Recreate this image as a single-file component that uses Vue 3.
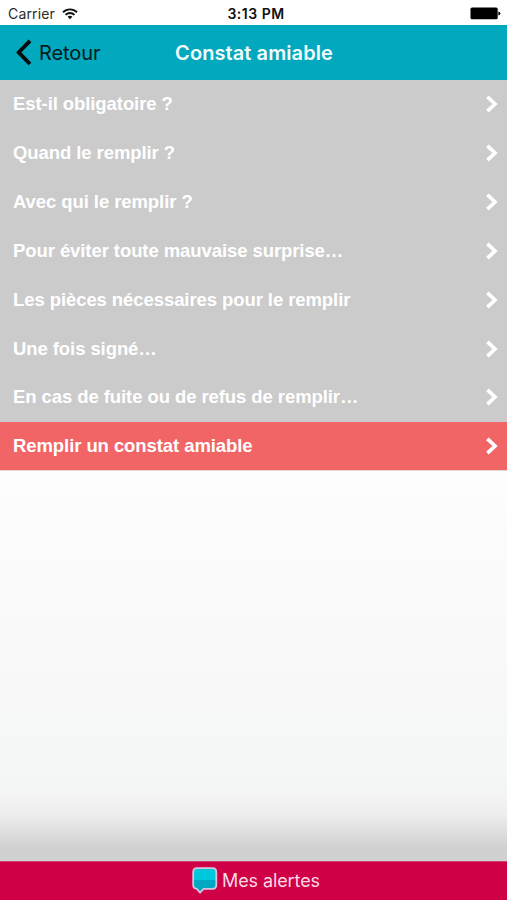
<script setup>
const items = [
  'Est-il obligatoire ?',
  'Quand le remplir ?',
  'Avec qui le remplir ?',
  'Pour éviter toute mauvaise surprise…',
  'Les pièces nécessaires pour le remplir',
  'Une fois signé…',
  'En cas de fuite ou de refus de remplir…',
  'Remplir un constat amiable',
]
</script>

<template>
  <div class="screen">
    <div class="status">
      <div class="side">
        <span class="carrier">Carrier</span>
        <svg class="wifi" width="16" height="12" viewBox="0 0 16 12">
          <g fill="none" stroke="#111" stroke-width="1.9">
            <path d="M1 4.2a10 10 0 0 1 14 0" />
            <path d="M3.5 6.9a6.4 6.4 0 0 1 9 0" />
          </g>
          <path d="M5.6 8.8a3.5 3.5 0 0 1 4.8 0L8 11.2z" fill="#111" />
        </svg>
      </div>
      <span class="time">3:13 PM</span>
      <div class="side end">
        <svg width="31" height="13" viewBox="0 0 31 13">
          <rect x="0.5" y="0.6" width="27.2" height="11.7" rx="1.6" fill="#000" />
          <path d="M28.4 4.4q2 .6 2 2.1t-2 2.1z" fill="#000" />
        </svg>
      </div>
    </div>

    <header class="nav">
      <div class="back">
        <svg width="17" height="27" viewBox="0 0 17 27">
          <path d="M14 1.8L2.7 13.4L14 25" fill="none" stroke="#050b0c" stroke-width="3.8" />
        </svg>
        <span class="back-label">Retour</span>
      </div>
      <h1 class="title">Constat amiable</h1>
    </header>

    <ul class="list">
      <li v-for="(item, i) in items" :key="item" class="row" :class="{ accent: i === items.length - 1 }">
        <span class="label">{{ item }}</span>
        <svg width="14" height="18" viewBox="0 0 14 18">
          <path d="M2.4 1.9L10 9L2.4 16.1" fill="none" stroke="#fff" stroke-width="3.7" />
        </svg>
      </li>
    </ul>

    <main class="body"></main>

    <footer class="footer">
      <svg width="26" height="28" viewBox="0 0 26 28">
        <path d="M5 1.2H20.5Q24.3 1.2 24.3 5V18Q24.3 21.8 20.5 21.8H11.6L8 25.7L4.8 21.8Q1.2 21.5 1.2 18V5Q1.2 1.2 5 1.2Z" fill="#00c8dc" />
        <path d="M1.2 13H24.3V18Q24.3 21.8 20.5 21.8H11.6L8 25.7L4.8 21.8Q1.2 21.5 1.2 18Z" fill="#00a9c1" />
        <path d="M5 1.2H20.5Q24.3 1.2 24.3 5V18Q24.3 21.8 20.5 21.8H11.6L8 25.7L4.8 21.8Q1.2 21.5 1.2 18V5Q1.2 1.2 5 1.2Z" fill="none" stroke="#d5c5dc" stroke-width="1.8" stroke-linejoin="round" />
      </svg>
      <span class="alerts">Mes alertes</span>
    </footer>
  </div>
</template>

<style>
body {
  margin: 0;
}
</style>

<style scoped>
.screen {
  width: 507px;
  height: 900px;
  display: flex;
  flex-direction: column;
  overflow: hidden;
  background: #fff;
  font-family: Inter, 'Liberation Sans', sans-serif;
}
.status {
  height: 25px;
  box-sizing: border-box;
  display: grid;
  grid-template-columns: 1fr auto 1fr;
  align-items: center;
  padding: 2px 6px 0 8px;
  color: #111;
}
.side {
  display: flex;
  align-items: center;
  gap: 7px;
}
.end {
  justify-content: flex-end;
}
.carrier {
  font-size: 14px;
  letter-spacing: 0.15px;
  color: #2a2a2a;
}
.time {
  font-size: 14px;
  font-weight: 600;
  letter-spacing: 0.5px;
  padding-left: 3px;
}
.nav {
  height: 54.5px;
  box-sizing: border-box;
  padding-top: 1px;
  display: grid;
  grid-template-columns: 1fr auto 1fr;
  align-items: center;
  background: #01a8be;
}
.back {
  display: flex;
  align-items: center;
  gap: 6px;
  padding-left: 16px;
}
.back-label {
  font-size: 20px;
  letter-spacing: -0.1px;
  color: #07181b;
}
.title {
  margin: 0;
  padding-left: 1px;
  font-size: 20px;
  font-weight: 600;
  letter-spacing: 0.08px;
  color: #f2fcfd;
}
.list {
  height: 391px;
  box-sizing: border-box;
  margin: 0;
  padding: 0;
  list-style: none;
  display: grid;
  grid-template-rows: repeat(6, 48.93px) 48.62px 48px;
  border-bottom: 1px solid #e6d8d8;
  background: #cbcbcb;
}
.row {
  display: flex;
  align-items: center;
  justify-content: space-between;
  padding: 0 8px 0 13px;
}
.accent {
  background: #f26567;
}
.label {
  font: bold 18.5px 'Liberation Sans', Arial, sans-serif;
  letter-spacing: -0.08px;
  color: #fff;
}
.body {
  flex: 1;
  background: linear-gradient(#fdfdfd 0, #fbfbfb 25%, #f8f8f8 55%, #f5f8f7 74%, #f4f6f5 81%, #f2f2f2 85%, #ededed 88%, #e4e4e4 91%, #d9d9d9 94%, #d0d0d0 97%, #d1d1d1 100%);
}
.footer {
  height: 39px;
  box-sizing: border-box;
  display: flex;
  align-items: center;
  justify-content: center;
  gap: 4px;
  padding: 0 0 1px 5px;
  border-top: 1px solid #d33c6c;
  background: #cf0046;
}
.alerts {
  font-size: 18px;
  letter-spacing: -0.1px;
  color: #fbd9e5;
}
</style>
